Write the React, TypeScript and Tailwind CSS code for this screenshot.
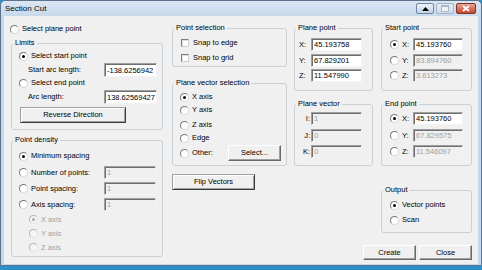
import type { ReactNode } from "react";

function Radio({ checked, disabled }: { checked?: boolean; disabled?: boolean }) {
    return (
        <span
            className={`w-[9px] h-[9px] shrink-0 rounded-full border flex items-center justify-center ${
                disabled
                    ? "border-t-[#b4b4b4] border-l-[#b4b4b4] border-r-[#e4e4e4] border-b-[#e4e4e4] bg-[#f6f6f6]"
                    : "border-t-[#7a7a7a] border-l-[#7a7a7a] border-r-[#d8d8d8] border-b-[#d8d8d8] bg-white"
            }`}
        >
            {checked && <span className={`w-[3px] h-[3px] rounded-full ${disabled ? "bg-[#a8a8a8]" : "bg-black"}`} />}
        </span>
    );
}

function RadioRow({ label, checked, disabled, className }: { label: string; checked?: boolean; disabled?: boolean; className: string }) {
    return (
        <div className={`flex items-center ${className}`}>
            <Radio checked={checked} disabled={disabled} />
            <span className={`ml-[3px] ${disabled ? "text-[#a0a0a0]" : ""}`}>{label}</span>
        </div>
    );
}

function CheckRow({ label, className }: { label: string; className: string }) {
    return (
        <div className={`flex items-center ${className}`}>
            <span className="w-[8px] h-[8px] shrink-0 border border-t-[#7f7f7f] border-l-[#7f7f7f] border-r-[#cfcfcf] border-b-[#cfcfcf] bg-white shadow-[inset_1px_1px_0_#dedede]" />
            <span className="ml-[4px]">{label}</span>
        </div>
    );
}

function Field({ value, dim, className }: { value: string; dim?: boolean; className: string }) {
    return (
        <input
            readOnly
            value={value}
            className={`${className} shrink-0 border border-t-[#a0a0a0] border-l-[#a0a0a0] border-r-[#f4f4f4] border-b-[#f4f4f4] shadow-[inset_1px_1px_0_#6e6e6e] pl-[2px] text-[7.5px] leading-none outline-none ${
                dim ? "bg-[#f0f0f0] text-[#a0a0a0]" : "bg-white text-black"
            }`}
        />
    );
}

function Button({ children, className, strong }: { children: ReactNode; className: string; strong?: boolean }) {
    return (
        <button
            className={`${className} shrink-0 flex items-center justify-center bg-[#f0f0f0] border ${
                strong
                    ? "border-t-[#a0a0a0] border-l-[#a0a0a0] border-r-[#3c3c3c] border-b-[#3c3c3c] shadow-[inset_1px_1px_0_#ffffff,inset_-1px_-1px_0_#a0a0a0]"
                    : "border-t-white border-l-white border-r-[#6a6a6a] border-b-[#6a6a6a] shadow-[inset_-1px_-1px_0_#a0a0a0]"
            }`}
        >
            {children}
        </button>
    );
}

function Group({ label, className, children }: { label: string; className: string; children: ReactNode }) {
    return (
        <fieldset className={`min-w-0 border border-[#cad1d6] rounded-[3px] ${className}`}>
            <legend className="ml-[1px] px-[2px] h-[10px] leading-[10px]">{label}</legend>
            {children}
        </fieldset>
    );
}

function Coord({ label, value, dim, className }: { label: string; value: string; dim?: boolean; className: string }) {
    return (
        <div className={`flex items-center h-[13px] pl-[4px] ${className}`}>
            <span className="w-[12px]">{label}</span>
            <Field className="w-[51px] h-[13px]" value={value} dim={dim} />
        </div>
    );
}

function VecRow({ label, value, className }: { label: string; value: string; className: string }) {
    return (
        <div className={`flex items-center h-[13px] ${className}`}>
            <span className="w-[16px] pr-[1px] text-right">{label}</span>
            <Field className="w-[51px] h-[13px]" value={value} dim />
        </div>
    );
}

function PickRow({ label, value, checked, dim, className }: { label: string; value: string; checked?: boolean; dim?: boolean; className: string }) {
    return (
        <div className={`flex items-center h-[13px] pl-[8px] ${className}`}>
            <Radio checked={checked} />
            <span className="ml-[3px] w-[11px]">{label}</span>
            <Field className="w-[50px] h-[13px]" value={value} dim={dim} />
        </div>
    );
}

export default function App() {
    return (
        <div className="w-[482px] h-[270px] flex flex-col bg-[#2c8fc8] font-['Liberation_Sans',Arial,sans-serif] text-[7.5px] leading-none text-black select-none">
            <div className="h-[266px] flex flex-col border border-[#5d728c] rounded-t-[5px] bg-[#c8d8eb]">
                {/* title bar */}
                <div className="h-[15px] flex items-start bg-gradient-to-b from-[#dbe6f3] to-[#c8d9ec] rounded-t-[5px]">
                    <span className="ml-[4px] mt-[4px] text-[8px]">Section Cut</span>
                    <div className="ml-auto mr-[5px] mt-[2px] flex gap-[2px]">
                        <div className="w-[18px] h-[11px] rounded-[2px] border border-[#6f86a3] bg-gradient-to-b from-[#eef3f9] to-[#c3d3e6] flex items-center justify-center">
                            <svg width="7" height="4" viewBox="0 0 7 4">
                                <path d="M0 4 L3.5 0 L7 4 Z" fill="#000" />
                            </svg>
                        </div>
                        <div className="w-[18px] h-[11px] rounded-[2px] border border-[#a3b4c8] bg-gradient-to-b from-[#e6edf5] to-[#cfdbe9] flex items-center justify-center">
                            <svg width="8" height="7" viewBox="0 0 8 7">
                                <rect x="0.5" y="0.5" width="7" height="6" fill="#eef2f6" stroke="#aab7c6" />
                                <rect x="0.5" y="0.5" width="7" height="1.5" fill="#aab7c6" />
                            </svg>
                        </div>
                        <div className="w-[20px] h-[11px] rounded-[2px] border border-[#7f3428] bg-gradient-to-b from-[#eaa393] to-[#c4422b] flex items-center justify-center">
                            <svg width="8" height="7" viewBox="0 0 8 7">
                                <path d="M1 1 L7 6 M7 1 L1 6" stroke="#fff" strokeWidth="1.7" />
                            </svg>
                        </div>
                    </div>
                </div>

                {/* client area */}
                <div className="h-[248px] mx-[3px] bg-[#f0f0f0] flex pl-[6px]">
                    {/* column 1 */}
                    <div className="flex flex-col w-[154px]">
                        <RadioRow className="mt-[7px] h-[12px]" label="Select plane point" />
                        <Group label="Limits" className="mt-[3px] mx-[1px] pb-[6px]">
                            <RadioRow className="mt-[1px] h-[14px] pl-[7px]" checked label="Select start point" />
                            <div className="flex items-center h-[14px] pl-[16px]">
                                <span className="w-[76px]">Start arc length:</span>
                                <Field className="w-[53px] h-[14px]" value="-138.6256942" />
                            </div>
                            <RadioRow className="h-[12px] pl-[7px]" label="Select end point" />
                            <div className="flex items-center h-[14px] mt-[1px] pl-[16px]">
                                <span className="w-[76px]">Arc length:</span>
                                <Field className="w-[53px] h-[14px]" value="138.62569427" />
                            </div>
                            <Button strong className="mt-[3px] ml-[8px] w-[106px] h-[16px]">
                                Reverse Direction
                            </Button>
                        </Group>
                        <Group label="Point density" className="mt-[5px] mx-[1px] pb-[2px]">
                            <RadioRow className="mt-[5px] h-[12px] pl-[7px]" checked label="Minimum spacing" />
                            <div className="flex items-center h-[13px] mt-[4px] pl-[7px]">
                                <Radio />
                                <span className="ml-[3px] w-[73px]">Number of points:</span>
                                <Field className="w-[52px] h-[13px]" value="1" dim />
                            </div>
                            <div className="flex items-center h-[13px] mt-[3px] pl-[7px]">
                                <Radio />
                                <span className="ml-[3px] w-[73px]">Point spacing:</span>
                                <Field className="w-[52px] h-[13px]" value="1" dim />
                            </div>
                            <div className="flex items-center h-[13px] mt-[3px] pl-[7px]">
                                <Radio />
                                <span className="ml-[3px] w-[73px]">Axis spacing:</span>
                                <Field className="w-[52px] h-[13px]" value="1" dim />
                            </div>
                            <RadioRow className="mt-[2px] h-[13px] pl-[17px]" checked disabled label="X axis" />
                            <RadioRow className="mt-[1px] h-[13px] pl-[17px]" disabled label="Y axis" />
                            <RadioRow className="mt-[1px] h-[13px] pl-[17px]" disabled label="Z axis" />
                        </Group>
                    </div>

                    {/* column 2 */}
                    <div className="flex flex-col w-[115px] ml-[8px]">
                        <Group label="Point selection" className="mt-[7px] pb-[2px]">
                            <CheckRow className="mt-[4px] h-[12px] pl-[8px]" label="Snap to edge" />
                            <CheckRow className="mt-[3px] h-[12px] pl-[8px]" label="Snap to grid" />
                        </Group>
                        <Group label="Plane vector selection" className="mt-[11px] pb-[4px]">
                            <RadioRow className="mt-[3px] h-[12px] pl-[7px]" checked label="X axis" />
                            <RadioRow className="mt-[1px] h-[12px] pl-[7px]" label="Y axis" />
                            <RadioRow className="mt-[3px] h-[12px] pl-[7px]" label="Z axis" />
                            <RadioRow className="mt-[1px] h-[12px] pl-[7px]" label="Edge" />
                            <div className="flex items-center h-[16px] mt-[1px] pl-[7px]">
                                <Radio />
                                <span className="ml-[3px] w-[36px]">Other:</span>
                                <Button className="w-[53px] h-[16px]">Select...</Button>
                            </div>
                        </Group>
                        <Button strong className="mt-[8px] w-[83px] h-[16px]">
                            Flip Vectors
                        </Button>
                    </div>

                    {/* columns 3 and 4 */}
                    <div className="flex flex-col w-[178px] ml-[7px]">
                        <div className="flex">
                            <div className="flex flex-col w-[79px]">
                                <Group label="Plane point" className="mt-[7px] pb-[8px]">
                                    <Coord className="mt-[5px]" label="X:" value="45.193758" />
                                    <Coord className="mt-[3px]" label="Y:" value="67.829201" />
                                    <Coord className="mt-[2px]" label="Z:" value="11.547990" />
                                </Group>
                                <Group label="Plane vector" className="mt-[8px] pb-[7px]">
                                    <VecRow className="mt-[3px]" label="I:" value="1" />
                                    <VecRow className="mt-[4px]" label="J:" value="0" />
                                    <VecRow className="mt-[3px]" label="K:" value="0" />
                                </Group>
                            </div>
                            <div className="flex flex-col w-[91px] ml-[8px]">
                                <Group label="Start point" className="mt-[7px] pb-[8px]">
                                    <PickRow className="mt-[5px]" checked label="X:" value="45.193760" />
                                    <PickRow className="mt-[3px]" dim label="Y:" value="83.894760" />
                                    <PickRow className="mt-[2px]" dim label="Z:" value="3.613273" />
                                </Group>
                                <Group label="End point" className="mt-[8px] pb-[7px]">
                                    <PickRow className="mt-[3px]" checked label="X:" value="45.193760" />
                                    <PickRow className="mt-[4px]" dim label="Y:" value="67.829575" />
                                    <PickRow className="mt-[3px]" dim label="Z:" value="11.546097" />
                                </Group>
                                <Group label="Output" className="mt-[19px] pb-[6px]">
                                    <RadioRow className="mt-[4px] h-[12px] pl-[8px]" checked label="Vector points" />
                                    <RadioRow className="mt-[3px] h-[12px] pl-[8px]" label="Scan" />
                                </Group>
                            </div>
                        </div>
                        <div className="flex justify-end gap-[3px] mt-[12px]">
                            <Button className="w-[53px] h-[15px]">Create</Button>
                            <Button className="w-[53px] h-[15px]">Close</Button>
                        </div>
                    </div>
                </div>
            </div>
        </div>
    );
}
